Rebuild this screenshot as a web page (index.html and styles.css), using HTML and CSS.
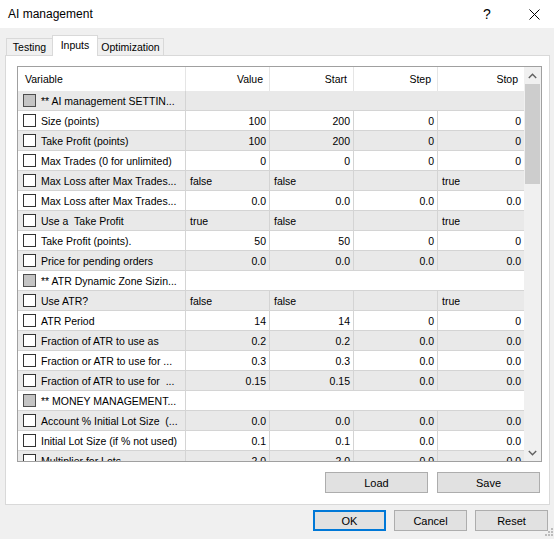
FILE: index.html
```html
<!DOCTYPE html>
<html lang="en">
<head>
    <meta charset="UTF-8">
    <title>AI management</title>
    <link rel="stylesheet" href="styles.css">
</head>
<body>
    <div class="titlebar">
        <div class="title">AI management</div>
        <div class="help">?</div>
        <div class="close">
            <svg width="11" height="11" viewBox="0 0 11 11"><path d="M0.5 0.5 L10.5 10.5 M10.5 0.5 L0.5 10.5" stroke="#000" stroke-width="1" fill="none"/></svg>
        </div>
    </div>

    <div class="tabs">
        <div class="tab tab-testing">Testing</div>
        <div class="tab tab-inputs active">Inputs</div>
        <div class="tab tab-optim">Optimization</div>
    </div>

    <div class="panel">
        <div class="list">
            <div class="grid">
                <div class="row head">
                    <div class="cell var">Variable</div>
                    <div class="cell">Value</div>
                    <div class="cell">Start</div>
                    <div class="cell">Step</div>
                    <div class="cell last">Stop</div>
                </div>
                <div class="row section gray">
                    <div class="cell var"><span class="check"></span>** AI management SETTIN...</div>
                    <div class="cell last"></div>
                </div>
                <div class="row">
                    <div class="cell var"><span class="check"></span>Size (points)</div>
                    <div class="cell">100</div><div class="cell">200</div><div class="cell">0</div><div class="cell last">0</div>
                </div>
                <div class="row gray">
                    <div class="cell var"><span class="check"></span>Take Profit (points)</div>
                    <div class="cell">100</div><div class="cell">200</div><div class="cell">0</div><div class="cell last">0</div>
                </div>
                <div class="row">
                    <div class="cell var"><span class="check"></span>Max Trades (0 for unlimited)</div>
                    <div class="cell">0</div><div class="cell">0</div><div class="cell">0</div><div class="cell last">0</div>
                </div>
                <div class="row gray">
                    <div class="cell var"><span class="check"></span>Max Loss after Max Trades...</div>
                    <div class="cell left">false</div><div class="cell left">false</div><div class="cell"></div><div class="cell left last">true</div>
                </div>
                <div class="row">
                    <div class="cell var"><span class="check"></span>Max Loss after Max Trades...</div>
                    <div class="cell">0.0</div><div class="cell">0.0</div><div class="cell">0.0</div><div class="cell last">0.0</div>
                </div>
                <div class="row gray">
                    <div class="cell var"><span class="check"></span>Use a&nbsp; Take Profit</div>
                    <div class="cell left">true</div><div class="cell left">false</div><div class="cell"></div><div class="cell left last">true</div>
                </div>
                <div class="row">
                    <div class="cell var"><span class="check"></span>Take Profit (points).</div>
                    <div class="cell">50</div><div class="cell">50</div><div class="cell">0</div><div class="cell last">0</div>
                </div>
                <div class="row gray">
                    <div class="cell var"><span class="check"></span>Price for pending orders</div>
                    <div class="cell">0.0</div><div class="cell">0.0</div><div class="cell">0.0</div><div class="cell last">0.0</div>
                </div>
                <div class="row section">
                    <div class="cell var"><span class="check"></span>** ATR Dynamic Zone Sizin...</div>
                    <div class="cell last"></div>
                </div>
                <div class="row gray">
                    <div class="cell var"><span class="check"></span>Use ATR?</div>
                    <div class="cell left">false</div><div class="cell left">false</div><div class="cell"></div><div class="cell left last">true</div>
                </div>
                <div class="row">
                    <div class="cell var"><span class="check"></span>ATR Period</div>
                    <div class="cell">14</div><div class="cell">14</div><div class="cell">0</div><div class="cell last">0</div>
                </div>
                <div class="row gray">
                    <div class="cell var"><span class="check"></span>Fraction of ATR to use as</div>
                    <div class="cell">0.2</div><div class="cell">0.2</div><div class="cell">0.0</div><div class="cell last">0.0</div>
                </div>
                <div class="row">
                    <div class="cell var"><span class="check"></span>Fraction or ATR to use for ...</div>
                    <div class="cell">0.3</div><div class="cell">0.3</div><div class="cell">0.0</div><div class="cell last">0.0</div>
                </div>
                <div class="row gray">
                    <div class="cell var"><span class="check"></span>Fraction of ATR to use for &nbsp;...</div>
                    <div class="cell">0.15</div><div class="cell">0.15</div><div class="cell">0.0</div><div class="cell last">0.0</div>
                </div>
                <div class="row section">
                    <div class="cell var"><span class="check"></span>** MONEY MANAGEMENT...</div>
                    <div class="cell last"></div>
                </div>
                <div class="row gray">
                    <div class="cell var"><span class="check"></span>Account % Initial Lot Size &nbsp;(...</div>
                    <div class="cell">0.0</div><div class="cell">0.0</div><div class="cell">0.0</div><div class="cell last">0.0</div>
                </div>
                <div class="row">
                    <div class="cell var"><span class="check"></span>Initial Lot Size (if % not used)</div>
                    <div class="cell">0.1</div><div class="cell">0.1</div><div class="cell">0.0</div><div class="cell last">0.0</div>
                </div>
                <div class="row gray">
                    <div class="cell var"><span class="check"></span>Multiplier for Lots</div>
                    <div class="cell">2.0</div><div class="cell">2.0</div><div class="cell">0.0</div><div class="cell last">0.0</div>
                </div>
            </div>
            <div class="scrollbar">
                <div class="arrow">
                    <svg width="9" height="6" viewBox="0 0 9 6"><polyline points="0.8,5 4.5,1.3 8.2,5" stroke="#606060" stroke-width="1.4" fill="none"/></svg>
                </div>
                <div class="thumb"></div>
                <div class="track"></div>
                <div class="arrow">
                    <svg width="9" height="6" viewBox="0 0 9 6"><polyline points="0.8,1 4.5,4.7 8.2,1" stroke="#606060" stroke-width="1.4" fill="none"/></svg>
                </div>
            </div>
        </div>

        <div class="panel-buttons">
            <button class="btn wide">Load</button>
            <button class="btn wide">Save</button>
        </div>
    </div>

    <div class="dialog-buttons">
        <button class="btn default">OK</button>
        <button class="btn">Cancel</button>
        <button class="btn">Reset</button>
    </div>

    <svg class="grip" width="12" height="12" viewBox="0 0 12 12">
        <rect x="9" y="1" width="2" height="2" fill="#bcbcbc"/>
        <rect x="6" y="4" width="2" height="2" fill="#bcbcbc"/>
        <rect x="9" y="4" width="2" height="2" fill="#bcbcbc"/>
        <rect x="3" y="7" width="2" height="2" fill="#bcbcbc"/>
        <rect x="6" y="7" width="2" height="2" fill="#bcbcbc"/>
        <rect x="9" y="7" width="2" height="2" fill="#bcbcbc"/>
    </svg>
</body>
</html>
```

FILE: styles.css
```css
* {
    margin: 0;
    padding: 0;
    box-sizing: border-box;
}

body {
    width: 554px;
    height: 539px;
    overflow: hidden;
    position: relative;
    background: #f0f0f0;
    color: #000;
    font-family: "Liberation Sans", Arial, sans-serif;
    font-size: 10.5px;
}

/* title bar */
.titlebar {
    height: 28px;
    background: #fff;
    display: flex;
    align-items: center;
    padding-left: 8px;
}

.title {
    flex: 1;
    font-size: 12px;
}

.help {
    width: 30px;
    text-align: center;
    font-size: 14px;
}

.close {
    width: 40px;
    margin-left: 12px;
    display: flex;
    justify-content: center;
}

/* tabs */
.tabs {
    height: 27px;
    display: flex;
    align-items: flex-end;
    padding-left: 6px;
}

.tab {
    height: 17px;
    border: 1px solid #d9d9d9;
    border-bottom: none;
    background: #f0f0f0;
    text-align: center;
    line-height: 17px;
}

.tab + .tab {
    margin-left: -1px;
}

.tab-testing { width: 47px; }
.tab-inputs { width: 46px; }
.tab-optim { width: 67px; }

.tab.active {
    height: 21px;
    line-height: 18px;
    background: #fff;
    margin-bottom: -1px;
    position: relative;
    z-index: 1;
}

/* tab page */
.panel {
    height: 450px;
    margin: 0 4px 0 5px;
    border: 1px solid #d9d9d9;
    background: #fff;
    padding: 10px 7px 11px 11px;
}

.list {
    height: 396px;
    border: 1px solid #a0a0a0;
    display: flex;
    background: #fff;
}

.grid {
    width: 506px;
    overflow: hidden;
}

.row {
    display: grid;
    grid-template-columns: 168px 84px 84px 84px 86px;
    height: 20px;
    border-bottom: 1px solid #d4d4d4;
}

.row.gray {
    background: #e9e9e9;
}

.row.head {
    height: 24px;
    border-bottom: none;
    background: #fff;
}

.row.section {
    grid-template-columns: 168px 338px;
}

.cell {
    display: flex;
    align-items: center;
    justify-content: flex-end;
    padding: 0 3px 0 4px;
    border-right: 1px solid #d4d4d4;
    white-space: nowrap;
    overflow: hidden;
}

.cell.left {
    justify-content: flex-start;
}

.cell.var {
    justify-content: flex-start;
    padding-left: 5px;
}

.cell.last {
    border-right: none;
}

.head .cell {
    border-right-color: #e5e5e5;
    padding-right: 6px;
}

.head .cell.var {
    padding-left: 7px;
}

.check {
    width: 13px;
    height: 13px;
    flex: none;
    border: 1px solid #333;
    background: #fff;
    margin-right: 5px;
}

.section .check {
    border-color: #4d4d4d;
    background: #c4c4c4;
}

/* scrollbar */
.scrollbar {
    width: 17px;
    background: #f0f0f0;
    display: flex;
    flex-direction: column;
}

.arrow {
    height: 17px;
    display: flex;
    align-items: center;
    justify-content: center;
}

.thumb {
    height: 100px;
    margin: 0 1px;
    background: #cdcdcd;
}

.track {
    flex: 1;
}

/* buttons */
.btn {
    height: 21px;
    width: 73px;
    border: 1px solid #adadad;
    background: #e1e1e1;
    font-family: "Liberation Sans", Arial, sans-serif;
    font-size: 11px;
    color: #000;
}

.btn.wide {
    width: 103px;
}

.btn.default {
    border: 2px solid #0078d7;
}

.panel-buttons {
    display: flex;
    justify-content: flex-end;
    gap: 9px;
    margin-top: 10px;
    margin-right: 2px;
}

.dialog-buttons {
    display: flex;
    justify-content: flex-end;
    gap: 8px;
    margin-top: 5px;
    padding-right: 6px;
}

.grip {
    position: absolute;
    right: 0;
    bottom: 0;
}
```
